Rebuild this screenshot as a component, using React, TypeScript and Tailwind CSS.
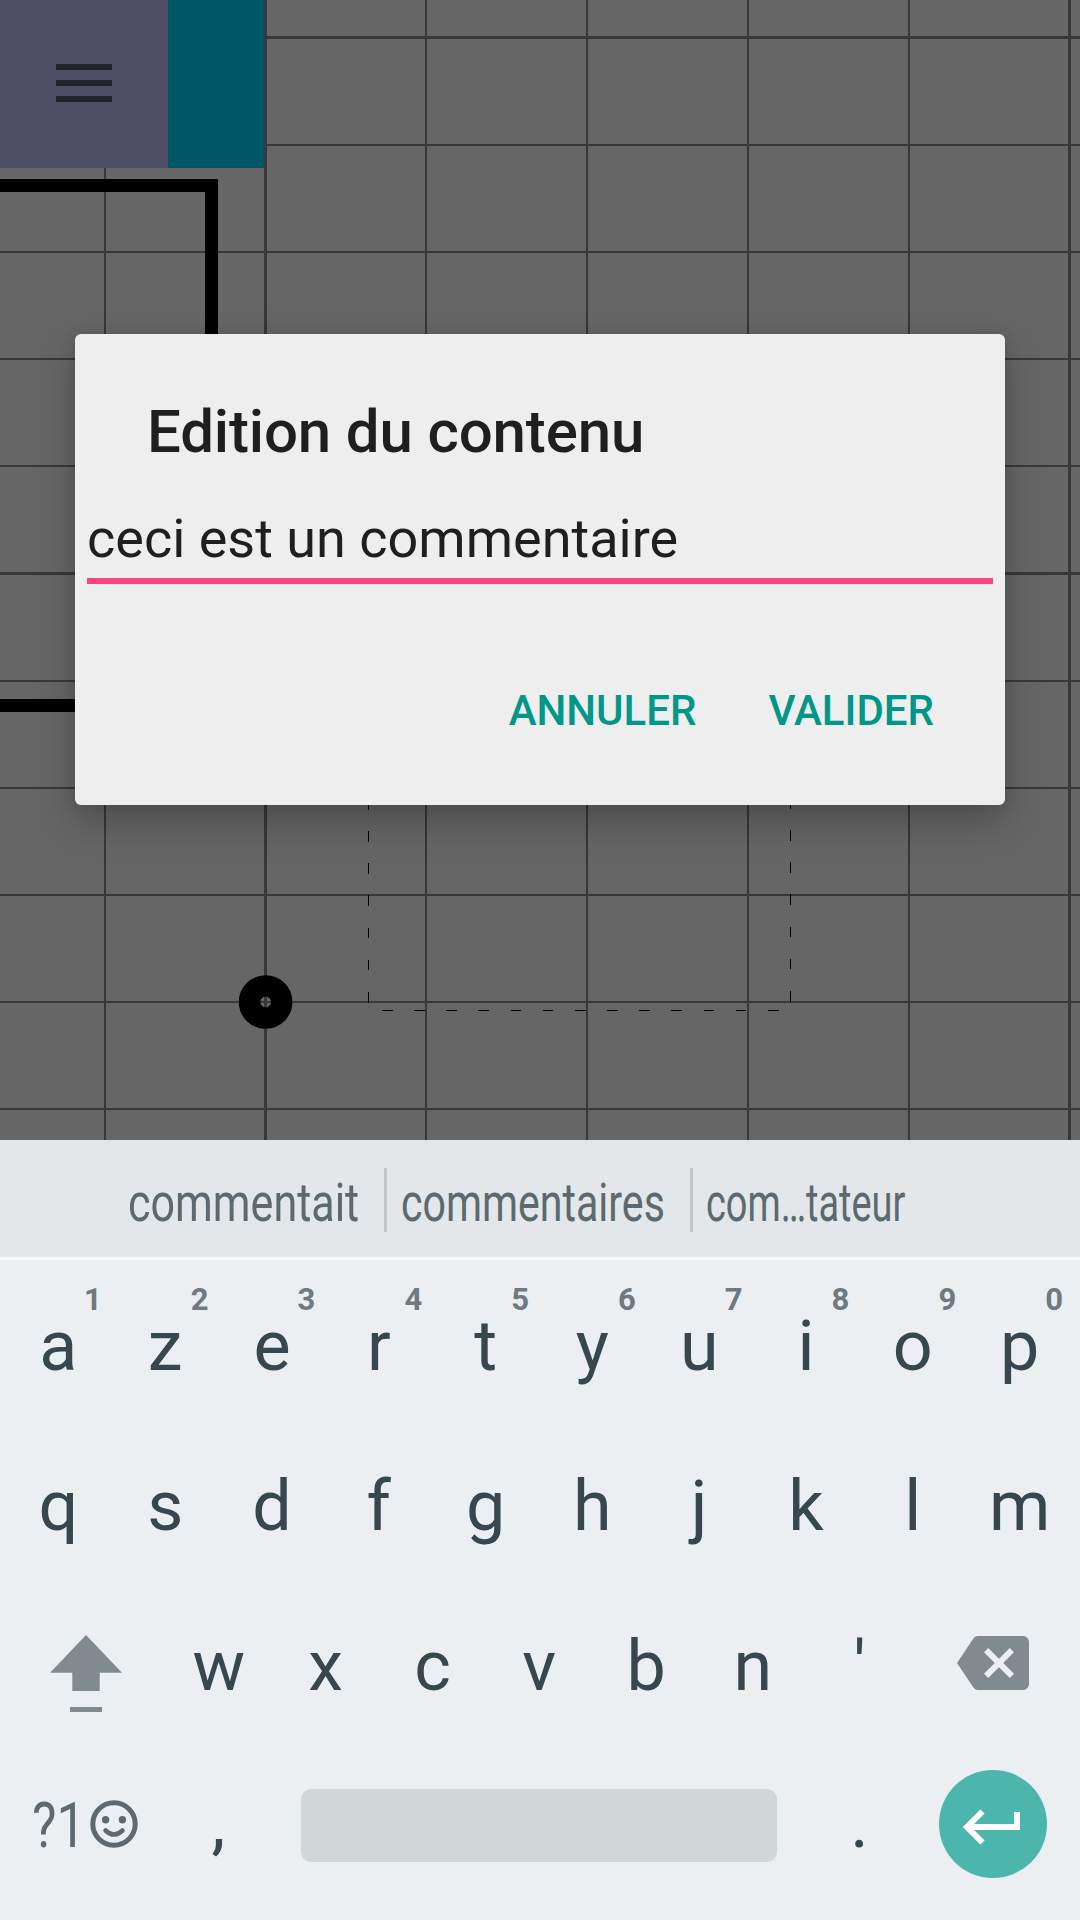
import React from "react";

const minorX = [104, 425, 586, 747, 908];
const majorX = [264, 1068];
const minorY = [144, 251, 358, 465, 680, 787, 894, 1001, 1108];
const majorY = [36, 572];

function PlanCanvas() {
  return (
    <svg className="absolute inset-0" width="1080" height="1140" viewBox="0 0 1080 1140">
      <g fill="#383838">
        {minorX.map((x) => (
          <rect key={x} x={x} y="0" width="2" height="1140" />
        ))}
        {majorX.map((x) => (
          <rect key={x} x={x} y="0" width="3" height="1140" />
        ))}
        {minorY.map((y) => (
          <rect key={y} x="0" y={y} width="1080" height="2" />
        ))}
        {majorY.map((y) => (
          <rect key={y} x="0" y={y} width="1080" height="3" />
        ))}
      </g>
      <path d="M-20 185.5H211.5V705.5H-20" fill="none" stroke="#000" strokeWidth="13" />
      <g stroke="#000" strokeWidth="1" strokeDasharray="10.7 21.45" shapeRendering="crispEdges">
        <path d="M368.5 798.9V1003" />
        <path d="M790.5 797.9V1002" />
        <path d="M382 1010.5H780" />
      </g>
      <circle cx="265.6" cy="1002" r="16.1" fill="none" stroke="#000" strokeWidth="21.4" />
    </svg>
  );
}

function Toolbar() {
  return (
    <div className="relative flex h-[168px] w-[264px]">
      <div className="flex w-[168px] flex-col items-center justify-center gap-[10px] bg-[#4e4e64] pb-[2px]">
        <span className="h-[6px] w-[56px] bg-[#23232d]" />
        <span className="h-[6px] w-[56px] bg-[#23232d]" />
        <span className="h-[6px] w-[56px] bg-[#23232d]" />
      </div>
      <div className="flex-1 bg-[#005666]" />
    </div>
  );
}

function EditDialog() {
  return (
    <div className="absolute top-[334px] left-[75px] flex h-[471px] w-[930px] flex-col rounded-[6px] bg-[#eeeeee] text-[#1f1f1f] shadow-[0_18px_40px_rgba(0,0,0,0.24),0_0_14px_rgba(0,0,0,0.1)]">
      <h1 className="mt-[62px] ml-[72px] text-[60px] leading-[72px] font-medium tracking-[-0.15px]">Edition du contenu</h1>
      <div className="mx-3 mt-[33px] h-[83px] border-b-[6px] border-[#ff4081] text-[54px] leading-[76px]">
        ceci est un commentaire
      </div>
      <div className="mt-[97px] flex justify-end gap-[72px] pr-[71px] text-[42px] leading-[60px] font-medium text-[#009688]">
        <button>ANNULER</button>
        <button>VALIDER</button>
      </div>
    </div>
  );
}

function Suggestions() {
  return (
    <div className="flex h-[120px] items-start border-b-[3px] border-[#f6f8fa] bg-[#e3e7e9] pt-7 text-[54px] leading-[70px] whitespace-nowrap text-[#5c696f]">
      <div className="w-[384px] pl-[128px]">
        <span className="inline-block origin-left scale-x-[0.797]">commentait</span>
      </div>
      <div className="h-16 w-[3px] bg-[#c3c7ca]" />
      <div className="w-[303px] pl-[13.5px]">
        <span className="inline-block origin-left scale-x-[0.761]">commentaires</span>
      </div>
      <div className="h-16 w-[3px] bg-[#c3c7ca]" />
      <div className="w-[303px] pl-[12.5px]">
        <span className="inline-block origin-left scale-x-[0.702]">com…tateur</span>
      </div>
    </div>
  );
}

function Key({ label, hint }: { label: string; hint?: string }) {
  return (
    <div className="relative w-[106.8px] text-center text-[70px] leading-[160px]">
      {label}
      {hint && (
        <span className="absolute top-[15px] right-[10px] text-[31px] leading-[38px] font-bold text-[#6e7a80]">
          {hint}
        </span>
      )}
    </div>
  );
}

function Keyboard() {
  return (
    <div className="flex h-[660px] flex-col bg-[#ebeff2] px-[5px] pt-[6px] text-[#37474f]">
      <div className="flex h-40">
        {"azertyuiop".split("").map((k, i) => (
          <Key key={k} label={k} hint={String((i + 1) % 10)} />
        ))}
      </div>
      <div className="flex h-40">
        {"qsdfghjklm".split("").map((k) => (
          <Key key={k} label={k} />
        ))}
      </div>
      <div className="flex h-40">
        <div className="flex w-[160.5px] pt-[49px] pl-[45px]">
          <svg width="72" height="78" viewBox="0 0 72 78" fill="#818b8f">
            <path d="M36 0 72 37.8H49.7V56H22.3V37.8H0Z" />
            <rect x="20" y="72" width="32" height="5" />
          </svg>
        </div>
        {"wxcvbn'".split("").map((k) => (
          <Key key={k} label={k} />
        ))}
        <div className="flex flex-1 pt-[50px] pl-[43.9px]">
          <svg width="72" height="54" viewBox="0 3 24 18" fill="#818b8f">
            <path d="M22 3H7c-.69 0-1.23.35-1.59.88L0 12l5.41 8.11c.36.53.9.89 1.59.89h15c1.1 0 2-.9 2-2V5c0-1.1-.9-2-2-2zm-3 12.59L17.59 17 14 13.41 10.41 17 9 15.59 12.59 12 9 8.41 10.41 7 14 10.59 17.59 7 19 8.41 15.41 12 19 15.59z" />
          </svg>
        </div>
      </div>
      <div className="flex h-40">
        <div className="flex w-[160px] pl-[27px]">
          <span className="w-[58px] origin-left scale-x-[0.82] text-[63px] leading-[160px] whitespace-nowrap text-[#5c696f]">
            ?1
          </span>
          <svg className="mt-[54px]" width="48" height="48" viewBox="0 0 48 48" fill="none" stroke="#5c696f">
            <circle cx="24" cy="24" r="21.2" strokeWidth="5" />
            <circle cx="15.6" cy="19.7" r="3.7" fill="#5c696f" stroke="none" />
            <circle cx="32.4" cy="19.7" r="3.7" fill="#5c696f" stroke="none" />
            <path d="M15.5 30.5Q24 38.5 32.5 30.5" strokeWidth="4.5" strokeLinecap="round" />
          </svg>
        </div>
        <div className="-mt-[3px] flex">
          <Key label="," />
        </div>
        <div className="mt-[43px] ml-[29.2px] h-[73px] w-[476px] rounded-[10px] bg-[#d1d6d9]" />
        <div className="-mt-[3px] ml-[29px] flex">
          <Key label="." />
        </div>
        <div className="mt-6 ml-[26px] flex size-[108px] rounded-full bg-[#4db6ac]">
          <svg width="108" height="108" viewBox="0 0 108 108" fill="none" stroke="#fff" strokeWidth="6">
            <path d="M78 42V57H30M43.5 41.5 28 57 43.5 72.5" />
          </svg>
        </div>
      </div>
    </div>
  );
}

export default function App() {
  return (
    <div className="flex h-[1920px] w-[1080px] flex-col overflow-hidden font-['Roboto',sans-serif]">
      <div className="relative h-[1140px] overflow-hidden bg-[#666666]">
        <PlanCanvas />
        <Toolbar />
        <EditDialog />
      </div>
      <Suggestions />
      <Keyboard />
    </div>
  );
}
